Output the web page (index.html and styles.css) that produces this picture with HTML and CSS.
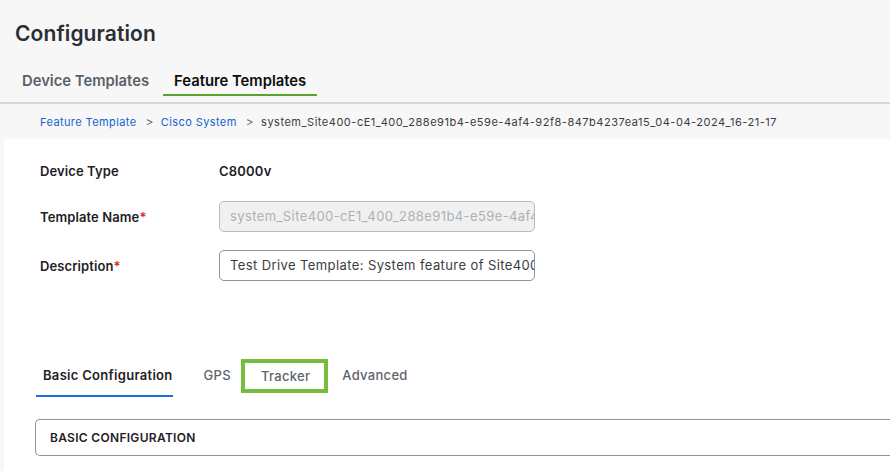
FILE: index.html
```html
<!DOCTYPE html>
<html>
<head>
<meta charset="utf-8">
<link rel="stylesheet" href="styles.css">
</head>
<body>
<div class="page">
  <header class="head">
    <h1 class="title">Configuration</h1>
    <nav class="top-tabs">
      <span class="top-tab">Device Templates</span>
      <span class="top-tab active">Feature Templates</span>
    </nav>
  </header>
  <div class="crumbs">
    <a class="crumb-link">Feature Template</a>
    <span class="sep">&gt;</span>
    <a class="crumb-link">Cisco System</a>
    <span class="sep">&gt;</span>
    <span class="crumb-cur">system_Site400-cE1_400_288e91b4-e59e-4af4-92f8-847b4237ea15_04-04-2024_16-21-17</span>
  </div>
  <main class="panel">
    <div class="form">
      <div class="row row-type">
        <span class="label">Device Type</span>
        <span class="value">C8000v</span>
      </div>
      <div class="row">
        <span class="label">Template Name<span class="req">*</span></span>
        <div class="input disabled">system_Site400-cE1_400_288e91b4-e59e-4af4</div>
      </div>
      <div class="row">
        <span class="label">Description<span class="req">*</span></span>
        <div class="input">Test Drive Template: System feature of Site400</div>
      </div>
    </div>
    <nav class="sub-tabs">
      <span class="sub-tab active">Basic Configuration</span>
      <span class="sub-tab">GPS</span>
      <span class="sub-tab boxed">Tracker</span>
      <span class="sub-tab">Advanced</span>
    </nav>
    <div class="section">BASIC CONFIGURATION</div>
  </main>
</div>
</body>
</html>
```
FILE: styles.css
```css
html, body {
  margin: 0;
  padding: 0;
  background: #f7f7f7;
  font-family: Inter, "Open Sans", "Liberation Sans", sans-serif;
  width: 890px;
  height: 471px;
  overflow: hidden;
}
.page {
  display: flex;
  flex-direction: column;
}
.head {
  padding: 0 0 0 4px;
  border-bottom: 2px solid #d6d6de;
  height: 104px;
  box-sizing: border-box;
}
.title {
  margin: 0;
  padding: 21px 0 0 11px;
  font-size: 21px;
  font-weight: 600;
  color: #2a2e35;
  line-height: 26px;
  letter-spacing: 0.1px;
}
.top-tabs {
  display: flex;
  margin-top: 20px;
  padding-left: 7px;
}
.top-tab {
  font-size: 14.8px;
  line-height: 18px;
  font-weight: 600;
  color: #5a616b;
  padding: 5px 11px 4px;
  border-bottom: 2px solid transparent;
}
.top-tab.active {
  color: #0d0d0d;
  border-bottom-color: #5ba22e;
  margin-left: 3px;
}
.crumbs {
  height: 35px;
  padding-left: 40px;
  display: flex;
  align-items: center;
  font-size: 11px;
  letter-spacing: 0.4px;
  color: #3a3d42;
}
.crumb-link {
  color: #1463d0;
}
.sep {
  color: #6b6f76;
  margin: 0 7px 0 9px;
  font-size: 12px;
}
.crumb-cur {
  letter-spacing: 0.52px;
}
.panel {
  margin-left: 4px;
  background: #ffffff;
  height: 340px;
  padding: 0 0 0 31px;
}
.form {
  display: flex;
  flex-direction: column;
  padding-top: 21px;
  padding-left: 5px;
}
.row {
  display: flex;
  align-items: center;
  height: 31px;
  margin-bottom: 18px;
}
.row-type {
  height: 22px;
  margin-bottom: 19px;
}
.label {
  width: 179px;
  font-size: 13px;
  font-weight: 600;
  color: #1f2125;
  letter-spacing: 0.1px;
}
.req {
  color: #d4242a;
}
.value {
  font-size: 13px;
  font-weight: 600;
  color: #1f2125;
  letter-spacing: 0.2px;
}
.input {
  box-sizing: border-box;
  width: 316px;
  height: 31px;
  border: 1px solid #8f939b;
  border-radius: 5px;
  padding: 0 10px;
  font-size: 13px;
  letter-spacing: 0.4px;
  line-height: 29px;
  color: #3a3d42;
  white-space: nowrap;
  overflow: hidden;
  background: #fff;
}
.input.disabled {
  background: #f0f0f0;
  border-color: #b8bbc0;
  color: #aeb1b6;
}
.sub-tabs {
  display: flex;
  align-items: flex-start;
  margin-top: 61px;
  padding-left: 1px;
  height: 37px;
}
.sub-tab {
  font-size: 13px;
  line-height: 16px;
  font-weight: 500;
  letter-spacing: 0.3px;
  color: #5e646d;
  padding: 7px 0 12px;
}
.sub-tab.active {
  color: #1f2125;
  font-weight: 600;
  padding: 7px 0 12px 7px;
  border-bottom: 2px solid #1b6fd6;
  margin-right: 31px;
}
.sub-tab.boxed {
  border: 4px solid #78bc3c;
  padding: 5px 14px 5px 16px;
  margin: -1px 14px 0 10px;
  box-sizing: border-box;
  height: 34px;
}
.section {
  margin-top: 22px;
  height: 37px;
  box-sizing: border-box;
  border: 1px solid #8f939b;
  border-right: none;
  border-radius: 5px 0 0 5px;
  padding-left: 14px;
  display: flex;
  align-items: center;
  font-size: 12px;
  font-weight: 600;
  color: #1f2125;
  letter-spacing: 0.3px;
}
```
